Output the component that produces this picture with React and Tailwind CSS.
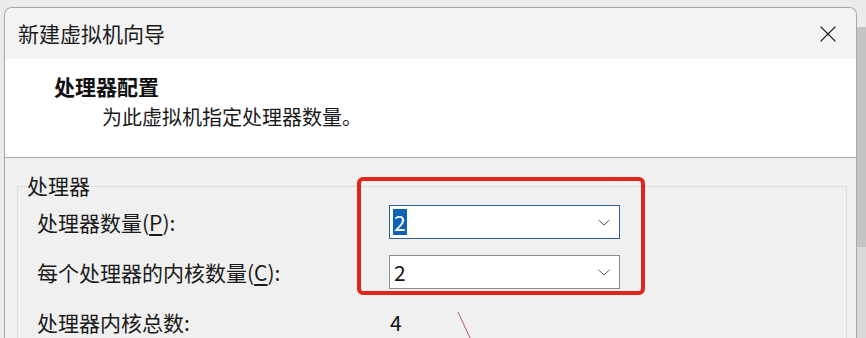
const font = "font-['Noto_Sans_CJK_SC','Noto_Sans',sans-serif]"

function CloseIcon() {
  return (
    <svg width="16" height="16" viewBox="0 0 16 16">
      <path d="M0.6 0.6 L15.4 15.4 M15.4 0.6 L0.6 15.4" stroke="#1a1a1a" strokeWidth="1.3" fill="none" />
    </svg>
  )
}

function Chevron() {
  return (
    <svg width="12" height="7" viewBox="0 0 12 7" className="shrink-0">
      <path d="M0.5 0.8 L6 6 L11.5 0.8" fill="none" stroke="#5a5a5a" strokeWidth="1" />
    </svg>
  )
}

function Combo({ value, focused }) {
  return (
    <div
      className={`flex h-[34px] w-[231px] items-center justify-between bg-white pl-[3px] pr-[9px] border ${
        focused ? 'border-[#2a5f99]' : 'border-[#8c8c8c]'
      }`}
    >
      <span
        className={`text-[21px] leading-[26px] px-[1px] ${
          focused ? 'bg-[#0d62b3] text-white' : 'text-[#111]'
        }`}
      >
        {value}
      </span>
      <Chevron />
    </div>
  )
}

function Row({ label, children }) {
  return (
    <div className="flex h-[34px] items-center">
      <div className="w-[371px] pl-[19px] text-[21px] leading-none text-[#1a1a1a]">{label}</div>
      {children}
    </div>
  )
}

export default function App() {
  return (
    <div className={`relative flex h-[338px] w-[866px] overflow-hidden bg-[#ececec] ${font}`}>
      <div className="w-[4px] shrink-0" />
      <div className="mt-[7px] w-[853px] shrink-0 rounded-t-[8px] border border-b-0 border-[#a9a9a9] overflow-hidden shadow-[0_0_2px_rgba(0,0,0,0.08)]">
        <div className="flex h-[51px] items-center justify-between bg-[#f3f3f3] pl-[13px] pr-[20px]">
          <span className="text-[21px] leading-none text-[#1a1a1a]">新建虚拟机向导</span>
          <CloseIcon />
        </div>
        <div className="h-[99px] border-b border-[#a6a6a6] bg-white pt-[17px]">
          <div className="pl-[49px] text-[21px] font-bold leading-none text-[#111]">处理器配置</div>
          <div className="mt-[10px] pl-[97px] text-[20px] leading-none text-[#1a1a1a]">为此虚拟机指定处理器数量。</div>
        </div>
        <div className="h-[200px] bg-[#f0f0f0] pt-[28px] pl-[12px] pr-[9px]">
          <div className="relative h-[200px] border border-[#dcdcdc] pt-[18px]">
            <span className="absolute left-[9px] top-[-12px] bg-[#f0f0f0] pr-[2px] text-[21px] leading-none text-[#1a1a1a]">
              处理器
            </span>
            <div className="flex flex-col gap-[16px]">
              <Row label={<>处理器数量(<u className="underline-offset-[3px]">P</u>):</>}>
                <Combo value="2" focused />
              </Row>
              <Row label={<>每个处理器的内核数量(<u className="underline-offset-[3px]">C</u>):</>}>
                <Combo value="2" />
              </Row>
              <Row label="处理器内核总数:">
                <span className="pl-[1px] text-[21px] leading-none text-[#111]">4</span>
              </Row>
            </div>
          </div>
        </div>
      </div>
      <div className="flex w-[9px] shrink-0 flex-col">
        <div className="h-[27px] bg-[#ececec]" />
        <div className="h-[220px] bg-[#c4c4c4]" />
        <div className="flex-1 bg-[#dadada]" />
      </div>

      <div className="absolute left-[357px] top-[177px] h-[118px] w-[288px] rounded-[6px] border-[4px] border-[#e3241c]" />
      <svg className="absolute left-[455px] top-[308px]" width="20" height="30" viewBox="0 0 20 30">
        <path d="M3 4 L15 30" stroke="#c0506a" strokeWidth="1" fill="none" />
      </svg>
    </div>
  )
}
